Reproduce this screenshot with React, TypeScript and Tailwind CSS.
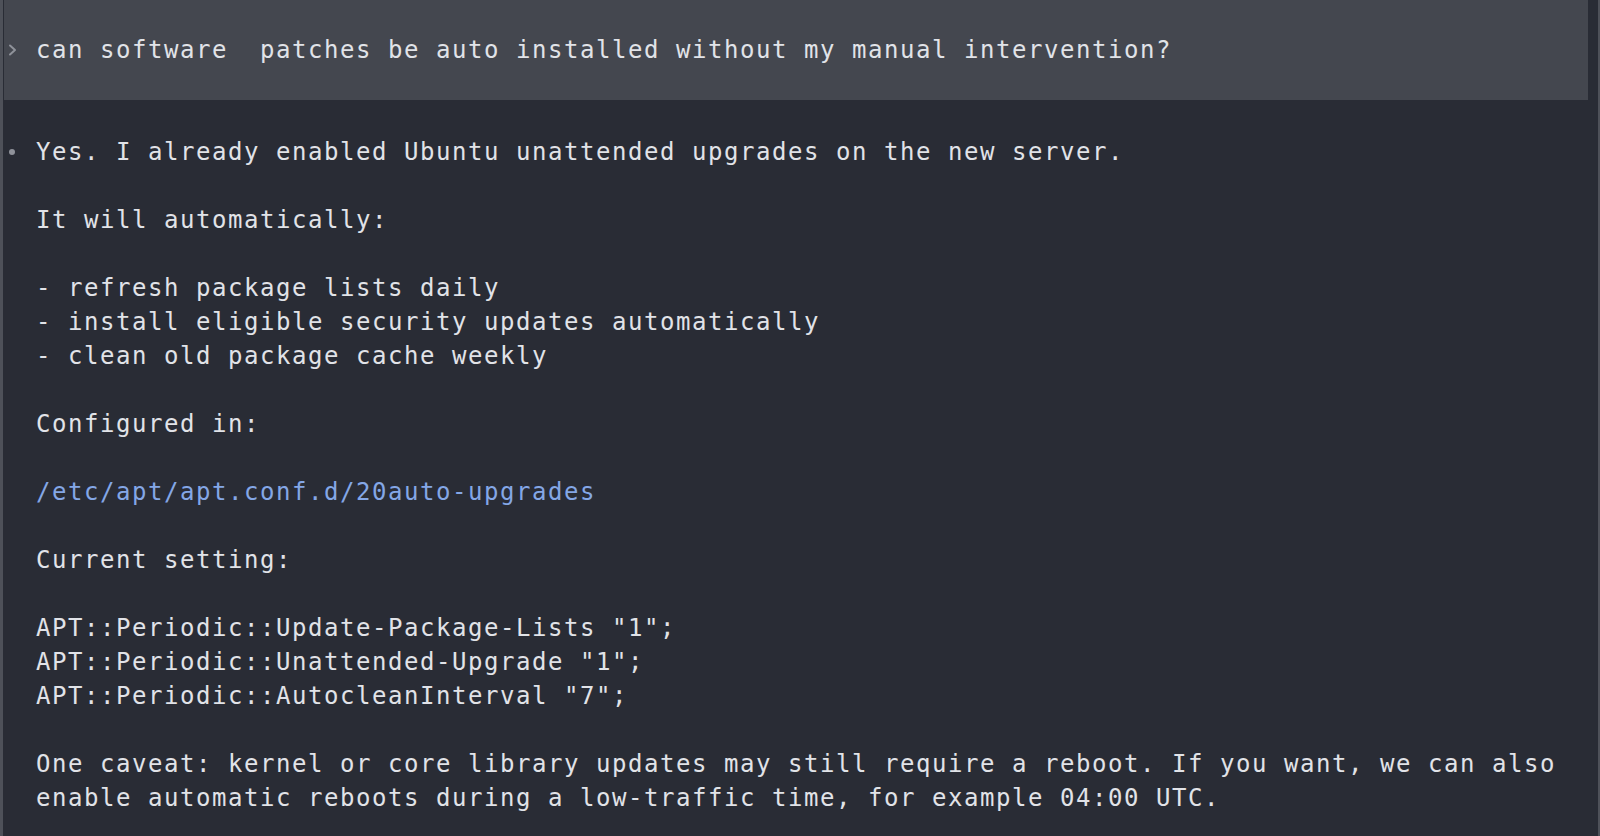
import React from 'react';

type Line = { text: string; kind?: 'path' };

const answer: Line[] = [
    { text: 'Yes. I already enabled Ubuntu unattended upgrades on the new server.' },
    { text: '' },
    { text: 'It will automatically:' },
    { text: '' },
    { text: '- refresh package lists daily' },
    { text: '- install eligible security updates automatically' },
    { text: '- clean old package cache weekly' },
    { text: '' },
    { text: 'Configured in:' },
    { text: '' },
    { text: '/etc/apt/apt.conf.d/20auto-upgrades', kind: 'path' },
    { text: '' },
    { text: 'Current setting:' },
    { text: '' },
    { text: 'APT::Periodic::Update-Package-Lists "1";' },
    { text: 'APT::Periodic::Unattended-Upgrade "1";' },
    { text: 'APT::Periodic::AutocleanInterval "7";' },
    { text: '' },
    { text: 'One caveat: kernel or core library updates may still require a reboot. If you want, we can also' },
    { text: 'enable automatic reboots during a low-traffic time, for example 04:00 UTC.' },
];

function Chevron() {
    return (
        <svg width="9" height="12" viewBox="0 0 9 12" fill="none">
            <polyline points="2,1.5 7,6 2,10.5" stroke="#8f929a" strokeWidth="2" strokeLinecap="round" strokeLinejoin="round" />
        </svg>
    );
}

export default function App() {
    return (
        <div className="flex h-[836px] w-full overflow-hidden bg-[#292c35] font-['DejaVu_Sans_Mono','Liberation_Mono',monospace] text-[24px] leading-[34px] tracking-[1.55px] text-[#e1e3e8]">
            {/* left gutter line */}
            <div className="w-[3px] shrink-0 bg-[#4e5159]" />

            <div className="ml-px mr-[10px] flex-1">
                {/* user prompt */}
                <div className="flex h-[100px] bg-[#44474f] pt-[33px]">
                    <div className="flex h-[34px] w-4 shrink-0 items-center justify-center">
                        <Chevron />
                    </div>
                    <div className="ml-4 whitespace-pre">can software  patches be auto installed without my manual intervention?</div>
                </div>

                {/* assistant reply */}
                <div className="flex pt-[35px]">
                    <div className="flex h-[34px] w-4 shrink-0 items-center justify-center">
                        <div className="h-[6px] w-[6px] rounded-full bg-[#8f929a]" />
                    </div>
                    <div className="ml-4">
                        {answer.map((l, i) => (
                            <div
                                key={i}
                                className={l.kind === 'path' ? 'h-[34px] whitespace-pre text-[#84a7e6]' : 'h-[34px] whitespace-pre'}
                            >
                                {l.text}
                            </div>
                        ))}
                    </div>
                </div>
            </div>

            {/* scrollbar edge */}
            <div className="w-[2px] shrink-0 bg-[#4e5159]" />
        </div>
    );
}
